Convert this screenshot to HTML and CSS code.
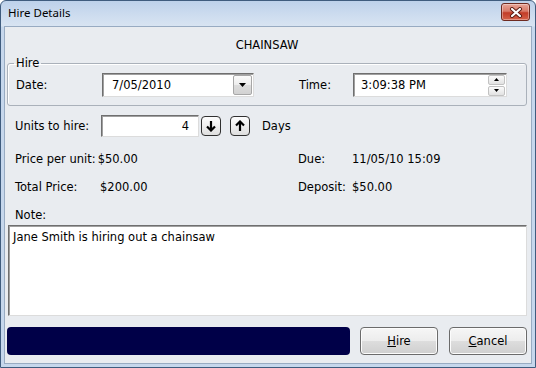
FILE: index.html
```html
<!DOCTYPE html>
<html lang="en">
<head>
    <meta charset="UTF-8">
    <title>Hire Details</title>
    <link rel="stylesheet" href="styles.css">
</head>
<body>
    <div class="window">
        <div class="titlebar">
            <span class="title">Hire Details</span>
            <button class="close-btn" aria-label="Close">
                <svg width="14" height="11" viewBox="0 0 14 11">
                    <path d="M3 2 L11 9 M11 2 L3 9" stroke="#5a1a12" stroke-width="4" stroke-linecap="round"/>
                    <path d="M3 2 L11 9 M11 2 L3 9" stroke="#fff" stroke-width="2.2" stroke-linecap="round"/>
                </svg>
            </button>
        </div>
        <div class="client">
            <div class="item-name">CHAINSAW</div>

            <fieldset class="group">
                <legend>Hire</legend>
                <div class="row">
                    <span class="label">Date:</span>
                    <div class="field combo">
                        <span class="field-text">7/05/2010</span>
                        <span class="drop-btn">
                            <svg width="7" height="4" viewBox="0 0 7 4"><path d="M0 0 H7 L3.5 4 Z" fill="#000"/></svg>
                        </span>
                    </div>
                    <span class="label label-right">Time:</span>
                    <div class="field timebox">
                        <span class="field-text">3:09:38 PM</span>
                        <span class="spin">
                            <span class="spin-btn"><svg width="5" height="3" viewBox="0 0 5 3"><path d="M0 3 H5 L2.5 0 Z" fill="#000"/></svg></span>
                            <span class="spin-btn"><svg width="5" height="3" viewBox="0 0 5 3"><path d="M0 0 H5 L2.5 3 Z" fill="#000"/></svg></span>
                        </span>
                    </div>
                </div>
            </fieldset>

            <div class="row units-row">
                <span class="label">Units to hire:</span>
                <div class="field units">4</div>
                <button class="arrow-btn" aria-label="Decrease">
                    <svg width="12" height="12" viewBox="0 0 12 12">
                        <path d="M6 1 V10.5 M2 6.5 L6 10.5 L10 6.5" fill="none" stroke="#000" stroke-width="2.2"/>
                    </svg>
                </button>
                <button class="arrow-btn arrow-up" aria-label="Increase">
                    <svg width="12" height="12" viewBox="0 0 12 12">
                        <path d="M6 11 V1.5 M2 5.5 L6 1.5 L10 5.5" fill="none" stroke="#000" stroke-width="2.2"/>
                    </svg>
                </button>
                <span class="days">Days</span>
            </div>

            <div class="row info-row">
                <div class="pair">
                    <span class="key">Price per unit:</span>
                    <span>$50.00</span>
                </div>
                <div class="pair">
                    <span class="key key-right">Due:</span>
                    <span>11/05/10 15:09</span>
                </div>
            </div>

            <div class="row info-row">
                <div class="pair">
                    <span class="key key-total">Total Price:</span>
                    <span>$200.00</span>
                </div>
                <div class="pair">
                    <span class="key key-right">Deposit:</span>
                    <span>$50.00</span>
                </div>
            </div>

            <div class="row note-label">Note:</div>
            <textarea class="note" readonly>Jane Smith is hiring out a chainsaw</textarea>

            <div class="row footer">
                <div class="progress"></div>
                <button class="btn"><u>H</u>ire</button>
                <button class="btn"><u>C</u>ancel</button>
            </div>
        </div>
    </div>
</body>
</html>
```

FILE: styles.css
```css
html, body {
    margin: 0;
    padding: 0;
}
body {
    width: 536px;
    height: 368px;
    overflow: hidden;
    font-family: "DejaVu Sans", sans-serif;
    font-size: 11.5px;
    line-height: 14px;
    color: #000;
}
.window {
    width: 536px;
    height: 368px;
    box-sizing: border-box;
    border: 1px solid #3f5c7e;
    border-radius: 6px 6px 0 0;
    background: linear-gradient(to bottom, #bdd1ea 0, #cddcef 14px, #d8e4f2 25px, #c6d7ec 26px, #c6d7ec 100%);
    display: flex;
    flex-direction: column;
}
.titlebar {
    height: 25px;
    display: flex;
    align-items: center;
    justify-content: space-between;
    padding: 0 5px 0 7px;
}
.title {
    font-family: "Noto Sans", sans-serif;
    font-size: 11.5px;
    margin-top: -2px;
}
.close-btn {
    width: 29px;
    height: 18px;
    margin-top: -3px;
    padding: 0;
    border: 1px solid #6e2a20;
    border-radius: 3px;
    background: linear-gradient(to bottom, #e8a497 0, #d87a68 45%, #c23c27 55%, #d5624a 100%);
    box-shadow: inset 0 0 0 1px rgba(255, 255, 255, 0.35);
    display: flex;
    align-items: center;
    justify-content: center;
}
.client {
    flex: 1;
    margin: 0 3px 3px 3px;
    padding: 0 4px 0 2px;
    background: #e9ecf0;
    border: 1px solid #98abc2;
    display: flex;
    flex-direction: column;
}
.item-name {
    margin-top: 10px;
    height: 16px;
    line-height: 16px;
    text-align: center;
}
.group {
    margin: 3px 0 0 0;
    padding: 3px 8px 8px 8px;
    border: 1px solid #aab1ba;
    border-radius: 3px;
    box-shadow: inset 1px 1px 0 #fff;
}
.group legend {
    padding: 0 2px;
    margin-left: -2px;
    line-height: 14px;
}
.row {
    display: flex;
    align-items: center;
}
.label {
    width: 86px;
}
.label-right {
    width: 54px;
    margin-left: 45px;
}
.field {
    box-sizing: border-box;
    background: #fff;
    border: 1px solid;
    border-color: #6f6f6f #dcdcdc #dcdcdc #6f6f6f;
    box-shadow: inset 1px 1px 0 #a0a0a0;
    display: flex;
    align-items: center;
}
.field-text {
    flex: 1;
}
.combo {
    width: 152px;
    height: 24px;
    padding-left: 9px;
}
.drop-btn {
    width: 19px;
    height: 20px;
    margin-right: 1px;
    box-sizing: border-box;
    border: 1px solid #a7a7a7;
    border-radius: 2px;
    background: linear-gradient(to bottom, #fbfbfb 0, #ececec 50%, #dcdcdc 51%, #d2d2d2 100%);
    display: flex;
    align-items: center;
    justify-content: center;
}
.timebox {
    width: 154px;
    height: 24px;
    padding-left: 7px;
}
.spin {
    width: 17px;
    margin-right: 1px;
    display: flex;
    flex-direction: column;
    gap: 1px;
}
.spin-btn {
    height: 10px;
    box-sizing: border-box;
    border: 1px solid #c2c2c2;
    border-radius: 2px;
    background: linear-gradient(to bottom, #fbfbfb, #e2e2e2);
    display: flex;
    align-items: center;
    justify-content: center;
}
.units-row {
    margin-top: 9px;
    height: 22px;
    padding-left: 8px;
}
.units {
    width: 98px;
    height: 22px;
    justify-content: flex-end;
    padding-right: 9px;
}
.arrow-btn {
    width: 20px;
    height: 20px;
    margin-left: 2px;
    padding: 0;
    border: 1px solid #303030;
    border-radius: 4px;
    background: linear-gradient(to bottom, #fdfdfd 0, #efefef 50%, #dedede 100%);
    display: flex;
    align-items: center;
    justify-content: center;
}
.arrow-up {
    margin-left: 9px;
}
.days {
    margin-left: 12px;
}
.info-row {
    margin-top: 15px;
    height: 14px;
    padding-left: 8px;
}
.info-row + .info-row {
    margin-top: 14px;
}
.pair {
    display: flex;
}
.pair:first-child {
    width: 283px;
}
.key {
    min-width: 79px;
    margin-right: 2px;
}
.key-total {
    min-width: 83px;
}
.key-right {
    min-width: 52px;
}
.note-label {
    margin-top: 14px;
    height: 14px;
    padding-left: 8px;
}
.note {
    margin: 3px 0 0 1px;
    height: 91px;
    box-sizing: border-box;
    padding: 4px 4px;
    resize: none;
    font-family: inherit;
    font-size: 11.5px;
    line-height: 14px;
    color: #000;
    background: #fff;
    border: 1px solid;
    border-color: #6f6f6f #dcdcdc #dcdcdc #6f6f6f;
    box-shadow: inset 1px 1px 0 #a0a0a0;
    outline: none;
}
.footer {
    margin-top: 11px;
    height: 28px;
}
.progress {
    width: 343px;
    height: 28px;
    border-radius: 4px;
    background: #000048;
}
.btn {
    width: 78px;
    height: 28px;
    margin-left: 10px;
    padding: 0;
    font-family: inherit;
    font-size: 11.5px;
    color: #000;
    border: 1px solid #6b6b6b;
    border-radius: 4px;
    background: linear-gradient(to bottom, #f6f6f6 0, #ececec 50%, #dddddd 51%, #cfcfcf 100%);
    box-shadow: inset 0 0 0 1px #fcfcfc;
}
.btn + .btn {
    margin-left: 11px;
}
```
